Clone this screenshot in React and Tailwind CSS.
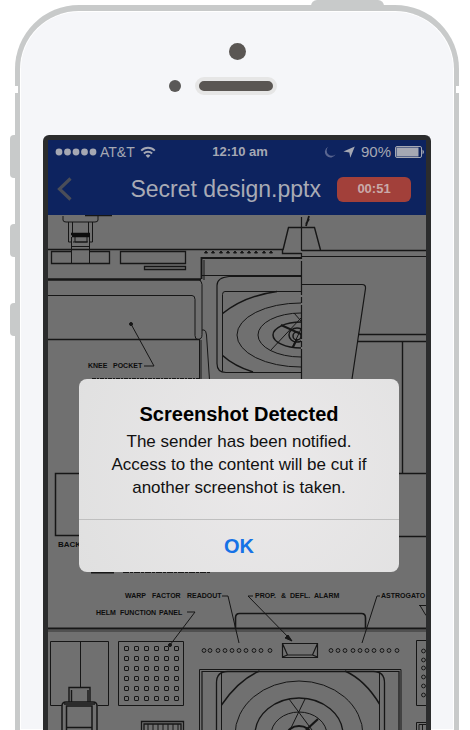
import React from "react";

const LEDS_LEFT = [204, 210, 218, 225, 232, 239, 246, 254, 261, 270];
const LEDS_RIGHT = [331, 338, 345, 353, 360, 367, 374, 382, 389, 397];
const LEDS_SIDE = [651, 660, 668, 677, 686, 695];
const KEYS = [0, 1, 2, 3, 4, 5];
const VENTS = [206, 213, 221, 228, 235, 242, 249, 256, 264, 271];

function SignalIcon() {
  return (
    <svg viewBox="0 0 42 8" className="h-2 w-[42px] shrink-0" fill="currentColor" aria-hidden="true">
      {[4, 12.5, 21, 29.5, 38].map((x) => (
        <circle key={x} cx={x} cy="4" r="3.4" />
      ))}
    </svg>
  );
}

function WifiIcon() {
  return (
    <svg viewBox="0 0 16 12" className="ml-0.5 h-3 w-4 shrink-0" fill="none" stroke="currentColor" strokeWidth="2" aria-hidden="true">
      <path d="M1.200 4.600a9.600 9.600 0 0 1 13.600 0" />
      <path d="M3.900 7.500a5.800 5.800 0 0 1 8.200 0" />
      <path d="M5.600 9.600a3.400 3.400 0 0 1 4.800 0L8 12Z" fill="currentColor" stroke="none" />
    </svg>
  );
}

function MoonIcon() {
  return (
    <svg viewBox="0 0 12 12" className="mr-[7px] h-3 w-3 shrink-0 text-[#5a6690]" fill="currentColor" aria-hidden="true">
      <path d="M4.200.8A5.600 5.600 0 1 0 11.600 8.200 4.600 4.600 0 0 1 4.200.8Z" />
    </svg>
  );
}

function LocationIcon() {
  return (
    <svg viewBox="0 0 12 12" className="mr-1.5 h-3 w-3 shrink-0" fill="currentColor" aria-hidden="true">
      <path d="M11.800.4 7.300 11.800 6.300 6.400.4 5.600Z" />
    </svg>
  );
}

function BatteryIcon() {
  return (
    <svg viewBox="0 0 30 12" className="ml-1 h-3 w-[30px] shrink-0" aria-hidden="true">
      <rect x="0.500" y="0.500" width="26" height="11" rx="1.500" fill="none" stroke="currentColor" />
      <rect x="1.500" y="1.500" width="22" height="9" fill="currentColor" />
      <path d="M27.500 3.500q3 2.500 0 5Z" fill="currentColor" />
    </svg>
  );
}

function Blueprint() {
  return (
    <svg
      viewBox="48 215 378 515"
      className="block h-auto w-full bg-[#707070]"
      fill="none"
      stroke="#161616"
      strokeWidth="1"
      role="img"
      aria-label="Console drawing"
    >
      <defs>
        <clipPath id="upper-dial">
          <rect x="222" y="284" width="79" height="96" />
        </clipPath>
      </defs>

      {/* upper console, left */}
      <path d="M63 216v4q0 2 3 2h29q3 0 3-2v-4M68.500 222v20h3M92.500 222v20h-3M72.500 222v12M88.500 222v12" />
      <path d="M71 234h19M72 236h18" strokeWidth="2.500" stroke="#0d0d0d" />
      <path d="M71.500 237v26M89.500 237v26M75 237v5h12v-5M73 242h15M71 246.500h19" />
      <path d="M85 215.500h27" strokeWidth="1.500" />
      <path d="M48 249.500h235M302 250.500h124" strokeWidth="1.700" />
      <path d="M71 251.500h-19.500v12h58v-12h-20M120.500 251.500h65v12h-65zM144.500 266.500h41v3h-41z" strokeWidth="1.300" />
      <path d="M48 279.500h153" strokeWidth="2.400" />
      <path d="M48 295.500h144q3 0 3 4v36q0 4 3 4 4 0 4-5v-50q-.5-4-2.500-4" />
      <path d="M48 339.500h152" strokeWidth="1.500" />
      <path d="M199.500 340v40M201 340v40" />
      <path d="M202 330h2q2 0 2.500 5l3 45" />
      <path d="M201.500 279v-22" strokeWidth="1.800" />
      <path d="M201 258h100" strokeWidth="2.200" />
      <path d="M204 260v20M202 275.500h99" />
      <path d="M283 250l5.500-22.500h26L320.500 250M282.500 250v3.500h19" strokeWidth="1.400" />
      <path d="M302 256.500h124" />
      {VENTS.map((x) => (
        <path key={x} d={`M${x - 1.5} 253l1.500-2 1.500 2z`} fill="#161616" />
      ))}

      {/* upper dial */}
      <path d="M301 276.500h-72q-12 1-12 9v78q0 9 9 9h75" strokeWidth="1.200" />
      <path d="M301 291.500h-76q-2.500 0-2.500 3v77" />
      <g clipPath="url(#upper-dial)">
        <path d="M222 314q22-18 55-22.500M222 355q12 11 31 17" strokeWidth="1.500" />
        <ellipse cx="301" cy="335" rx="64" ry="32" />
        <ellipse cx="301" cy="335" rx="43" ry="22" />
        <ellipse cx="301" cy="335" rx="28" ry="13" strokeWidth="1.500" />
        <ellipse cx="297" cy="335" rx="8" ry="7" strokeWidth="1.500" />
        <ellipse cx="297" cy="336" rx="4" ry="4" strokeWidth="1.500" />
        <path d="M270 351l31-33M294 313l7 8M292 348l9-19" />
        <path d="M281 325l20 9M293 347l4-8" strokeWidth="2" />
      </g>
      <path d="M301.500 217v162" strokeDasharray="34 2 6 2" strokeWidth="1.200" />
      <path d="M309 216l-3 10M309 219l-3 5" strokeWidth="1.800" />

      {/* upper console, right */}
      <path d="M302 284.500h60q4 0 3.500 4L352 379" strokeWidth="1.200" />
      <path d="M358 334.500h68M357 341.500h69" strokeWidth="1.300" />
      <path d="M402.500 341v132M399 473.500h27M399 536.500h27" strokeWidth="1.400" />

      {/* leaders and callouts */}
      <path d="M144 366h10l-23-42" />
      <circle cx="131" cy="324" r="1.500" fill="#161616" />
      <path d="M92 378.500h108" strokeDasharray="4 1 2 1" />
      <path d="M85 473.500H55.500v62H85" strokeWidth="1.500" />
      <path d="M91 572.500h23" strokeWidth="2" />
      <path d="M123 572.500h88" strokeDasharray="6 1 3 1" />
      <path d="M222 596h6l11 47M187 612h8l-25 33M253 596h-5l44 45M380 596h-3l-15 47" />
      <path d="M292 641l-7-3 3-3z" fill="#161616" />
      <circle cx="170" cy="645" r="1.500" fill="#161616" />
      <path d="M419 605.500h7M420 605.500l6 10" />
      <g fill="#0d0d0d" stroke="none" className="font-['Liberation_Sans',Arial,sans-serif] text-[7px] font-bold">
        <text x="88" y="368">KNEE</text>
        <text x="113" y="368">POCKET</text>
        <text x="58" y="547" className="text-[8px]">BACK</text>
        <text x="125" y="598">WARP</text>
        <text x="152" y="598">FACTOR</text>
        <text x="187" y="598">READOUT</text>
        <text x="96" y="615">HELM</text>
        <text x="120" y="615">FUNCTION</text>
        <text x="159" y="615">PANEL</text>
        <text x="255" y="598">PROP.</text>
        <text x="281" y="598">&amp;</text>
        <text x="290" y="598">DEFL.</text>
        <text x="314" y="598">ALARM</text>
        <text x="381" y="598">ASTROGATO</text>
      </g>

      {/* lower console */}
      <path d="M48 628.500h378" strokeWidth="1.800" />
      <path d="M48 631h378" strokeWidth="0.700" />
      <path d="M235.500 628v-10q0-4.500 4-4.500h122q4 0 4 4.500v10" strokeWidth="1.600" />
      <path d="M50.500 641.500h58v64h-11M62 705.500H50.500v-64M80.500 641v46M118.500 641.500h65v64h-65z" />
      <path d="M69 702v-14.500h21V702M71.500 690v12M88 690v12" strokeWidth="1.400" />
      <path d="M62 730v-24q0-4 4-4h27q4 0 4 4v24M66.500 730v-24h25.500v24M66 727.500h26M64 704h31" strokeWidth="1.500" />
      {KEYS.map((row) =>
        KEYS.map((col) => (
          <rect key={`${row}-${col}`} x={124.5 + col * 10} y={646.5 + row * 10} width="4" height="4" rx="0.500" />
        ))
      )}
      <path d="M141.500 730v-8.500h42v8.500M144 730v-6h37v6" strokeWidth="1.300" />
      <path d="M148 724v6M153 724v6M158 724v6M163 724v6M168 724v6M173 724v6M178 724v6" />
      {LEDS_LEFT.concat(LEDS_RIGHT).map((x) => (
        <circle key={x} cx={x} cy="650.5" r="1.900" />
      ))}
      <path d="M282.500 643.500h35v14h-35zM282.500 643.500l5 11.500h25l5-11.500M282.500 657l5-2M317.500 657l-5-2" strokeWidth="1.200" />
      <path d="M199.500 730v-60.500h201.500V730" />
      <path d="M202 730v-58.500h197V730" strokeWidth="1.200" />
      <path d="M216.500 730v-47q0-11.500 11-11.500h146q11 0 11 11.500v47" strokeWidth="1.300" />
      <path d="M221.500 730v-57M379.500 730v-57" />
      <path d="M221.500 705q17-25 38-34M345 671q20 9 34.500 33" strokeWidth="1.500" />
      <ellipse cx="299" cy="735" rx="64" ry="54" />
      <ellipse cx="299" cy="735" rx="44" ry="37" strokeWidth="1.300" />
      <ellipse cx="299" cy="735" rx="28" ry="23" />
      <ellipse cx="299" cy="735" rx="12" ry="9" strokeWidth="2" />
      <path d="M289 699l23 31M305 699l-15 31" />
      <path d="M318 719l-12 11" strokeWidth="2.200" />
      <path d="M426 640.500h-9.500v65h9.500M426 722.500h-9.500v7.500M426 724.500h-7v5.500M422.500 725v5" />
      {LEDS_SIDE.map((y) => (
        <circle key={y} cx="423.5" cy={y} r="1.900" />
      ))}
    </svg>
  );
}

function StatusBar() {
  return (
    <div className="grid h-6 grid-cols-[1fr_auto_1fr] items-center pl-[7px] pr-px text-sm text-[#a5a8b3]">
      <div className="flex items-center gap-[3px]">
        <SignalIcon />
        <span>AT&amp;T</span>
        <WifiIcon />
      </div>
      <time className="text-[13px] font-bold">12:10 am</time>
      <div className="flex items-center justify-end">
        <MoonIcon />
        <LocationIcon />
        <span className="text-[15px]">90%</span>
        <BatteryIcon />
      </div>
    </div>
  );
}

function TitleBar() {
  return (
    <header className="flex h-[51px] items-center pb-px pl-2 pr-[15px]">
      <button type="button" aria-label="Back" className="text-[#4a4d58]">
        <svg viewBox="0 0 16 24" className="h-6 w-4" fill="none" stroke="currentColor" strokeWidth="3.200" aria-hidden="true">
          <path d="M14.500 1.500 3.500 12l11 10.500" />
        </svg>
      </button>
      <h1 className="flex-1 pr-4 text-right text-[23px] leading-7 text-[#a9abb5]">Secret design.pptx</h1>
      <span className="flex h-[25px] w-[74px] items-center justify-center rounded-md bg-[#a2403a] text-[13px] font-bold text-[#c9aaa9]">
        00:51
      </span>
    </header>
  );
}

function Alert() {
  return (
    <div
      role="alertdialog"
      aria-labelledby="alert-title"
      aria-describedby="alert-text"
      className="w-full rounded-lg bg-[radial-gradient(circle_at_60%_45%,#ebe9ea,#e0e0e0)] text-center"
    >
      <div className="border-b border-[#bfbfbf] px-5 pb-5 pt-[23px]">
        <h2 id="alert-title" className="text-xl leading-6 font-bold text-black">Screenshot Detected</h2>
        <p id="alert-text" className="mt-1 text-[17px] leading-[23px] text-[#111]">
          The sender has been notified. Access to the content will be cut if another screenshot is taken.
        </p>
      </div>
      <button type="button" className="h-[52px] w-full text-xl font-bold text-[#1672e6]">OK</button>
    </div>
  );
}

export default function App() {
  return (
    <main className="flex min-h-screen overflow-hidden bg-white pl-[15px] pr-[11px] pt-[5px] font-['Liberation_Sans',Arial,sans-serif]">
      <div className="relative flex flex-1 flex-col rounded-t-[64px] border-x-[5px] border-t-[6px] border-[#c8caca] bg-[#f5f6f9] shadow-[inset_0_0_0_1px_#ffffff]">
        {/* hardware buttons and antenna gaps */}
        <span className="absolute -top-[11px] right-[70px] h-[6px] w-[73px] rounded-t-md bg-[#c8caca]" />
        <span className="absolute -left-[10px] top-[124px] h-[43px] w-[6px] rounded-l-sm bg-[#c8caca]" />
        <span className="absolute -left-[10px] top-[213px] h-[33px] w-[6px] rounded-l-sm bg-[#c8caca]" />
        <span className="absolute -left-[10px] top-[292px] h-[33px] w-[6px] rounded-l-sm bg-[#c8caca]" />
        <span className="absolute -left-[5px] top-[75px] h-[7px] w-[3px] bg-white" />
        <span className="absolute -right-[5px] top-[75px] h-[7px] w-[3px] bg-white" />

        <div className="flex h-[124px] flex-col items-center pt-8">
          <span className="h-[17px] w-[17px] rounded-full bg-[#5a5653]" />
          <div className="mt-[17px] flex w-full items-center pr-4">
            <div className="flex flex-1 justify-end pr-[14px]">
              <span className="h-3 w-3 rounded-full bg-[#5a5857]" />
            </div>
            <span className="h-[18px] w-[82px] rounded-full border-4 border-[#e6e6e6] bg-[#5a5653]" />
            <div className="flex-1" />
          </div>
        </div>

        <section className="mx-[23px] flex flex-1 flex-col rounded-t-md border-x-[5px] border-t-[5px] border-[#2b2c2d] bg-[#707070]">
          <div className="relative">
            <div className="bg-[#0d235f]">
              <StatusBar />
              <TitleBar />
            </div>
            <Blueprint />
            <div className="absolute inset-0 flex items-start pl-[31px] pr-[27px] pt-[239px]">
              <Alert />
            </div>
          </div>
        </section>
      </div>
    </main>
  );
}
